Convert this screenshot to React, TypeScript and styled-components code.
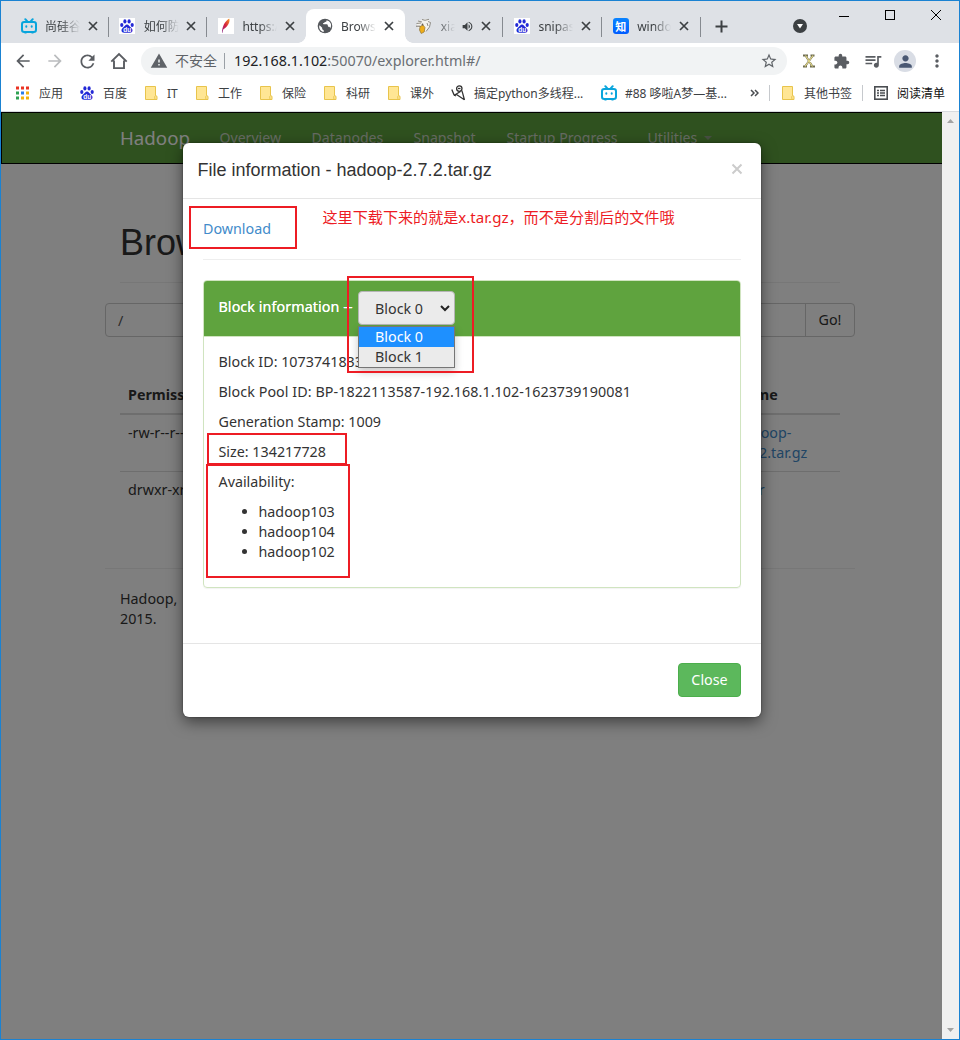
import React from "react";
import styled, { createGlobalStyle, css } from "styled-components";
import {
  MdArrowBack,
  MdArrowForward,
  MdRefresh,
  MdWarning,
  MdStarBorder,
  MdExtension,
  MdQueueMusic,
  MdPerson,
  MdMoreVert,
  MdVolumeUp,
} from "react-icons/md";

const ui = `"Noto Sans", "Noto Sans CJK SC", sans-serif`;

const GlobalStyle = createGlobalStyle`
  * { box-sizing: border-box; }
  body { margin: 0; font-family: ${ui}; overflow: hidden; }
  h1, h4, p, ul { margin: 0; padding: 0; font-weight: 400; }
  svg { display: block; flex: none; }
`;

/* ---------- browser window ---------- */

const Window = styled.div`
  width: 960px;
  height: 1040px;
  border: 1px solid #1a82d2;
  display: flex;
  flex-direction: column;
  background: #fff;
  overflow: hidden;
`;

const TabStrip = styled.div`
  height: 42px;
  flex: none;
  background: #dee1e6;
  display: flex;
  padding: 8px 0 0 9px;
`;

const Tab = styled.div<{ $active?: boolean; $divider?: boolean }>`
  width: 98.7px;
  height: 34px;
  display: flex;
  align-items: center;
  padding-left: 10.5px;
  position: relative;
  ${(p) =>
    p.$divider &&
    css`
      &::after {
        content: "";
        position: absolute;
        right: 0;
        top: 8px;
        width: 1px;
        height: 20px;
        background: #868a90;
      }
    `}
  ${(p) =>
    p.$active &&
    css`
      background: #fff;
      border-radius: 8px 8px 0 0;
      &::before,
      &::after {
        content: "";
        position: absolute;
        bottom: 0;
        width: 8px;
        height: 8px;
      }
      &::before {
        left: -8px;
        background: radial-gradient(circle at 0 0, transparent 7.5px, #fff 8px);
      }
      &::after {
        right: -8px;
        background: radial-gradient(circle at 100% 0, transparent 7.5px, #fff 8px);
      }
    `}
`;

const TabTitle = styled.span<{ $w: number }>`
  width: ${(p) => p.$w}px;
  margin-left: 8.5px;
  overflow: hidden;
  white-space: nowrap;
  font-size: 12px;
  line-height: 18px;
  padding-top: 1px;
  color: #3c4043;
  mask-image: linear-gradient(to right, #000 calc(100% - 18px), transparent);
`;

const TabClose = styled.span`
  margin-left: 7.5px;
`;

const NewTab = styled.div`
  width: 30px;
  height: 34px;
  display: flex;
  align-items: center;
  margin-left: 14px;
`;

const TabSearch = styled.div`
  height: 34px;
  display: flex;
  align-items: center;
  margin-left: 48px;
`;

const WindowControls = styled.div`
  display: flex;
  align-items: center;
  height: 16px;
  margin: -2px 0 0 31px;
  gap: 34px;
`;

const Toolbar = styled.div`
  height: 36px;
  flex: none;
  display: flex;
  align-items: center;
  padding-left: 6px;
`;

const ToolButton = styled.div<{ $dim?: boolean }>`
  width: 32px;
  height: 32px;
  display: flex;
  align-items: center;
  justify-content: center;
  color: ${(p) => (p.$dim ? "#babcbe" : "#5a5d62")};
`;

const Omnibox = styled.div`
  width: 646px;
  height: 28px;
  margin: 0 6px 0 6px;
  border-radius: 14px;
  background: #f1f3f4;
  display: flex;
  align-items: center;
  padding: 0 9px 0 9px;
  color: #5f6368;
`;

const Security = styled.span`
  width: 50px;
  margin-left: 7px;
  font-size: 14px;
  line-height: 20px;
  border-right: 1px solid #9aa0a6;
  height: 16px;
  display: flex;
  align-items: center;
  white-space: nowrap;
`;

const Url = styled.span`
  margin-left: 9px;
  flex: 1;
  font-size: 14.3px;
  line-height: 20px;
  color: #6a6e73;
  b {
    font-weight: 400;
    color: #202124;
  }
`;

const Avatar = styled.div`
  width: 22px;
  height: 22px;
  border-radius: 50%;
  background: #d9dde5;
  color: #4a5873;
  display: flex;
  align-items: center;
  justify-content: center;
`;

const Bookmarks = styled.div`
  height: 33px;
  flex: none;
  display: flex;
  align-items: center;
  padding: 0 0 4px 14px;
  border-bottom: 1px solid #d7dade;
`;

const Bookmark = styled.div<{ $w: number; $gap?: number; $indent?: number; $dark?: boolean }>`
  width: ${(p) => p.$w}px;
  padding-left: ${(p) => p.$indent ?? 0}px;
  display: flex;
  align-items: center;
  gap: ${(p) => p.$gap ?? 9}px;
  font-size: 12px;
  line-height: 18px;
  white-space: nowrap;
  color: ${(p) => (p.$dark ? "#111" : "#3c4043")};
  span {
    padding-top: 2px;
  }
`;

const BookmarkDivider = styled.div`
  width: 1px;
  height: 16px;
  background: #c6c9cd;
`;

/* ---------- page ---------- */

const Viewport = styled.div`
  flex: 1;
  min-height: 0;
  display: flex;
  position: relative;
`;

const Page = styled.div`
  flex: 1;
  background: #fff;
  font-size: 14.3px;
  line-height: 20px;
  color: #333;
`;

const Backdrop = styled.div`
  position: absolute;
  inset: 0 17px 0 0;
  background: rgba(0, 0, 0, 0.5);
`;

const Scrollbar = styled.div`
  width: 17px;
  background: #f0f0f0;
  display: flex;
  flex-direction: column;
  justify-content: space-between;
  align-items: center;
  padding: 7px 0 7px;
`;

const Navbar = styled.div`
  height: 52px;
  border: 1px solid #000;
  border-right: 0;
  background: #5fa33e;
  padding-left: 118px;
  display: flex;
  align-items: center;
`;

const Brand = styled.div`
  width: 99.5px;
  font-size: 18.7px;
  color: #fff;
`;

const NavLink = styled.div<{ $w: number }>`
  width: ${(p) => p.$w}px;
  color: #ccd6c6;
  font-size: 14.1px;
  display: flex;
  align-items: center;
  gap: 7px;
  white-space: nowrap;
`;

const Caret = styled.i`
  border: 4px solid transparent;
  border-top-color: #8fa087;
  border-bottom: 0;
`;

const Container = styled.div`
  width: 750px;
  margin-left: 104px;
`;

const PageHeader = styled.div`
  margin: 0 15px;
  height: 119px;
  border-bottom: 1px solid #eee;
  padding-top: 59px;
`;

const PageTitle = styled.h1`
  font: 400 36px/40px "Liberation Sans", sans-serif;
`;

const PathForm = styled.div`
  display: flex;
  height: 34px;
  margin-top: 20px;
  border: 1px solid #ccc;
  border-radius: 4px;
`;

const PathInput = styled.div`
  flex: 1;
  padding: 7px 12px;
  color: #555;
`;

const GoButton = styled.div`
  width: 49px;
  border-left: 1px solid #ccc;
  padding: 6px 0;
  text-align: center;
`;

const Table = styled.div`
  margin: 40px 15px 0;
  height: 191px;
`;

const TableRow = styled.div<{ $head?: boolean; $h: number }>`
  display: grid;
  grid-template-columns: 607px 1fr;
  height: ${(p) => p.$h}px;
  padding: 8px 8px 0;
  font-weight: ${(p) => (p.$head ? 700 : 400)};
  border-bottom: ${(p) => (p.$head ? 2 : 1)}px solid #ddd;
  &:last-child {
    border-bottom: 0;
  }
`;

const FileLink = styled.span`
  color: #428bca;
`;

const Footer = styled.div`
  border-top: 1px solid #eee;
  padding: 20px 15px;
  p {
    width: 62px;
  }
`;

/* ---------- modal ---------- */

const Modal = styled.div`
  position: absolute;
  left: 182px;
  top: 31px;
  width: 578px;
  height: 574px;
  border-radius: 6px;
  background: #fff;
  box-shadow: 0 5px 15px rgba(0, 0, 0, 0.5), 0 0 2px rgba(0, 0, 0, 0.5);
  font-size: 14.3px;
  line-height: 20px;
  color: #333;
  display: flex;
  flex-direction: column;
`;

const ModalHeader = styled.div`
  height: 56px;
  border-bottom: 1px solid #e5e5e5;
  padding: 14px 18px 0 14.5px;
  display: flex;
  justify-content: space-between;
`;

const ModalTitle = styled.h4`
  font: 400 18px/26px "Liberation Sans", sans-serif;
`;

const ModalClose = styled.span`
  padding-top: 6px;
`;

const ModalBody = styled.div`
  padding: 20px;
  height: 444px;
`;

const Download = styled.div`
  height: 41px;
  border-bottom: 1px solid #eee;
  color: #428bca;
`;

const Panel = styled.div`
  margin-top: 20px;
  height: 308px;
  border: 1px solid #d0e4c0;
  border-radius: 4px;
  box-shadow: 0 1px 1px rgba(0, 0, 0, 0.05);
`;

const PanelHeading = styled.div`
  height: 56px;
  background: #5fa33e;
  border-bottom: 1px solid #d0e4c0;
  border-radius: 3px 3px 0 0;
  color: #fff;
  padding: 10px 15px 10px 14.5px;
  display: flex;
  gap: 4.5px;
  text-shadow: 0 0 0.6px #fff;
`;

const HeadingText = styled.span`
  padding-top: 6px;
  width: 135px;
  white-space: nowrap;
  letter-spacing: 0.08px;
`;

const SelectBox = styled.div`
  position: relative;
  width: 97px;
  height: 34px;
  border: 1px solid #b5b5b5;
  border-radius: 4px;
  background: #ebebeb;
  color: #333;
  padding: 1px 4px 0 16px;
  display: flex;
  align-items: center;
  justify-content: space-between;
  text-shadow: none;
`;

const Options = styled.div`
  position: absolute;
  left: -1px;
  top: 34px;
  width: 97px;
  border: 1px solid #767676;
  background: #ebebeb;
  box-shadow: 0 4px 8px rgba(0, 0, 0, 0.22);
`;

const Option = styled.div<{ $selected?: boolean }>`
  height: 20px;
  padding-left: 16px;
  background: ${(p) => (p.$selected ? "#1e90ff" : "#ebebeb")};
  color: ${(p) => (p.$selected ? "#fff" : "#333")};
`;

const PanelBody = styled.div`
  padding: 15px 15px 15px 14.5px;
  p {
    margin-bottom: 10px;
  }
  ul {
    padding-left: 40px;
  }
`;

const PoolId = styled.p`
  letter-spacing: 0.06px;
`;

const ModalFooter = styled.div`
  flex: 1;
  border-top: 1px solid #e5e5e5;
  padding: 19px 20px;
  display: flex;
  justify-content: flex-end;
`;

const CloseButton = styled.div`
  width: 63px;
  height: 34px;
  border: 1px solid #4cae4c;
  border-radius: 4px;
  background: #5cb85c;
  color: #fff;
  line-height: 32px;
  text-align: center;
`;

/* Red marker rectangles drawn on top of the dialog */
const Marker = styled.div<{ $x: number; $y: number; $w: number; $h: number }>`
  position: absolute;
  left: ${(p) => p.$x}px;
  top: ${(p) => p.$y}px;
  width: ${(p) => p.$w}px;
  height: ${(p) => p.$h}px;
  border: 2px solid #ed1c24;
`;

const Note = styled.div`
  position: absolute;
  left: 139.5px;
  top: 64px;
  color: #ed1c24;
  font-size: 15.1px;
  white-space: nowrap;
`;

/* ---------- icons ---------- */

const CloseX = () => (
  <svg width="10" height="10" viewBox="0 0 10 10" stroke="#3c4043" strokeWidth="1.7">
    <path d="M1 1l8 8M9 1l-8 8" />
  </svg>
);

const Bilibili = () => (
  <svg width="16" height="16" viewBox="0 0 16 16" fill="none" stroke="#0aa5dc" strokeWidth="2" strokeLinecap="round">
    <rect x="1" y="4" width="14" height="10" rx="2.2" />
    <path d="M4.3 1.2l1.8 2M11.7 1.2l-1.8 2" />
    <path d="M5.3 8.200v.6M10.700 8.200v.6" />
    <path d="M4 15h1M11 15h1" strokeWidth="1.2" />
  </svg>
);

const PawText = styled.text`
  font: 700 6.5px "Liberation Sans", sans-serif;
  fill: #fff;
`;

const Baidu = ({ tile }: { tile?: boolean }) => (
  <svg width={tile ? 16 : 14} height={tile ? 16 : 14} viewBox={tile ? "-1 -1 16 16" : "0 0 14 14"} fill="#2329d6">
    {tile && <rect x="-1" y="-1" width="16" height="16" fill="#fff" />}
    <ellipse cx="1.800" cy="6" rx="1.600" ry="2" />
    <ellipse cx="4.900" cy="2.400" rx="1.600" ry="2.100" />
    <ellipse cx="9.100" cy="2.400" rx="1.600" ry="2.100" />
    <ellipse cx="12.200" cy="6" rx="1.600" ry="2" />
    <path d="M7 5.400c1.600 0 2.300 1.500 3.300 2.500 1.300 1.200 2.300 2 2.200 3.700-.1 1.700-1.500 2.400-3 2.200-1.700-.2-3.300-.2-5 0-1.500.2-2.900-.5-3-2.200C1.400 9.900 2.400 9.100 3.700 7.900 4.700 6.900 5.400 5.400 7 5.400z" />
    <PawText x="3.2" y="12.600">du</PawText>
  </svg>
);

const Feather = () => (
  <svg width="16" height="16" viewBox="0 0 16 16">
    <defs>
      <linearGradient id="feather" x1="0" y1="1" x2="1" y2="0">
        <stop offset="0" stopColor="#8a2a8c" />
        <stop offset=".5" stopColor="#d5203e" />
        <stop offset="1" stopColor="#f59a23" />
      </linearGradient>
    </defs>
    <rect width="16" height="16" fill="#fff" />
    <path d="M4 14.8C4 9 6.600 3.500 11.200.6c1.300 3-1.200 8.200-6 10.900L4.400 15z" fill="url(#feather)" />
  </svg>
);

const Globe = () => (
  <svg width="16" height="16" viewBox="0 0 16 16">
    <circle cx="8" cy="8" r="7.300" fill="#54575b" />
    <path
      d="M2.500 7.200l2.700 2.600v1.400l1.500 1v1.700C4 13.400 2 11 2.200 8.200zM9.500 2.200c.3 1-.2 1.700-1.300 1.700-.9 0-.8.9-1.600 1.200-.8.200-.8 1 0 1.200h3.200c.9 0 1 .9 1.100 1.700.1.700 1 .7 1.700 1 .5.3.6.900.4 1.500 1.200-1.600 1.400-3.600.6-5.300C12.900 3.700 11.300 2.500 9.500 2.200z"
      fill="#fff"
    />
  </svg>
);

const Home = () => (
  <svg width="18" height="18" viewBox="0 0 18 18" fill="none" stroke="#5a5d62" strokeWidth="1.900">
    <path d="M1.300 9.700L9 2l7.700 7.700M4 8.500v7.600h10V8.500" />
  </svg>
);

const Eagle = () => (
  <svg width="17" height="17" viewBox="0 0 17 17">
    <path d="M3 3.500L8 1.500l5-.5 2.500 3-1 5-4 5-4 1.500L5 11 1.500 8.500z" fill="#f4f2ec" />
    <path d="M1.500 5.500l4.500-.5M3 3l4 1M7 1.500l3 .8 4-1M13 3.500l2.500 1-1 4.500-3.500 4.500M12 5l1 3" stroke="#85817b" strokeWidth=".9" fill="none" />
    <path d="M1 8.200h4l1.500 1.500" stroke="#77736d" fill="none" />
    <path d="M5 8.500L8 7l2 2.500-.8 4.500-3 1.500L4.500 12z" fill="#efae19" stroke="#8d7138" strokeWidth=".7" />
    <circle cx="7.500" cy="6.500" r=".9" fill="#6b6052" />
  </svg>
);

const ZhiTile = styled.span`
  width: 16px;
  height: 16px;
  border-radius: 3px;
  background: linear-gradient(#0a84ff, #005cff);
  color: #fff;
  font: 700 11px/16px "Noto Sans CJK SC", sans-serif;
  text-align: center;
  flex: none;
`;

const Speaker = styled(MdVolumeUp)`
  margin-left: 6px;
  color: #3c4043;
`;

const Folder = () => (
  <svg width="13" height="15" viewBox="0 0 13 15" fill="#ffe694" stroke="#e8c44c">
    <path d="M.5.500h10v9l1.500.800v3.200H.500z" />
    <path d="M10.500 9.500c-1.500 1.500-.5 3-.5 4" fill="none" />
  </svg>
);

const appColors = ["#ea3323", "#ea3323", "#ea3323", "#2fa152", "#2a7de9", "#f3b10b", "#2fa152", "#f3b10b", "#f3b10b"];
const Apps = () => (
  <svg width="14" height="14" viewBox="0 0 14 14">
    {appColors.map((c, i) => (
      <rect key={i} x={(i % 3) * 5 + 1} y={Math.floor(i / 3) * 5 + 0.5} width="3" height="3" fill={c} />
    ))}
  </svg>
);

const Doodle = () => (
  <svg width="15" height="16" viewBox="0 0 15 16" fill="none" stroke="#333" strokeWidth="1.300">
    <circle cx="8.300" cy="3.600" r="2.700" />
    <path d="M.8 4.500L3 9.800l2 1.200M2.800 10.500L9.500 6.500M10.500 5c1.500 3 2 7 3 10M13 14.500L5.500 9.500" />
    <path d="M7 3.500h2.500" />
  </svg>
);

const ReadingList = () => (
  <svg width="14" height="14" viewBox="0 0 14 14" stroke="#4a4d51" fill="none">
    <rect x=".8" y=".8" width="12.400" height="12.400" strokeWidth="1.600" />
    <path d="M3 4.500h2M3 7h2M3 9.500h2M6 4.500h5M6 7h5M6 9.500h5" strokeWidth="1.300" />
  </svg>
);

const ScrollArrow = ({ down }: { down?: boolean }) => (
  <svg width="7" height="4" viewBox="0 0 7 4" fill="#a3a3a3">
    <path d={down ? "M0 0h7L3.500 4z" : "M0 4h7L3.500 0z"} />
  </svg>
);

export default function App() {
  return (
    <>
      <GlobalStyle />
      <Window>
        <TabStrip>
          <Tab $divider>
            <Bilibili />
            <TabTitle $w={35}>尚硅谷大数据</TabTitle>
            <TabClose><CloseX /></TabClose>
          </Tab>
          <Tab $divider>
            <Baidu tile />
            <TabTitle $w={35}>如何防止</TabTitle>
            <TabClose><CloseX /></TabClose>
          </Tab>
          <Tab>
            <Feather />
            <TabTitle $w={35}>https://</TabTitle>
            <TabClose><CloseX /></TabClose>
          </Tab>
          <Tab $active>
            <Globe />
            <TabTitle $w={35}>Browsing</TabTitle>
            <TabClose><CloseX /></TabClose>
          </Tab>
          <Tab $divider>
            <Eagle />
            <TabTitle $w={14}>xiao</TabTitle>
            <Speaker size={13} />
            <TabClose><CloseX /></TabClose>
          </Tab>
          <Tab $divider>
            <Baidu tile />
            <TabTitle $w={35}>snipaste</TabTitle>
            <TabClose><CloseX /></TabClose>
          </Tab>
          <Tab $divider>
            <ZhiTile>知</ZhiTile>
            <TabTitle $w={34}>windows</TabTitle>
            <TabClose><CloseX /></TabClose>
          </Tab>
          <NewTab>
            <svg width="13" height="13" viewBox="0 0 13 13" stroke="#3c4043" strokeWidth="2">
              <path d="M6.500.500v12M.500 6.500h12" />
            </svg>
          </NewTab>
          <TabSearch>
            <svg width="14" height="14" viewBox="0 0 14 14">
              <circle cx="7" cy="7" r="7" fill="#3c4043" />
              <path d="M4 5h6L7 9.500z" fill="#fff" />
            </svg>
          </TabSearch>
          <WindowControls>
            <svg width="12" height="12" viewBox="0 0 12 12" stroke="#000"><path d="M1 7.500h10" /></svg>
            <svg width="12" height="12" viewBox="0 0 12 12" stroke="#000" fill="none"><rect x="1.500" y="1.500" width="9" height="9" /></svg>
            <svg width="12" height="12" viewBox="0 0 12 12" stroke="#000"><path d="M1 1l10 10M11 1L1 11" /></svg>
          </WindowControls>
        </TabStrip>

        <Toolbar>
          <ToolButton><MdArrowBack size={20} /></ToolButton>
          <ToolButton $dim><MdArrowForward size={20} /></ToolButton>
          <ToolButton><MdRefresh size={21} /></ToolButton>
          <ToolButton><Home /></ToolButton>
          <Omnibox>
            <MdWarning size={18} />
            <Security>不安全</Security>
            <Url><b>192.168.1.102</b>:50070/explorer.html#/</Url>
            <MdStarBorder size={18} />
          </Omnibox>
          <ToolButton>
            <svg width="14" height="14" viewBox="0 0 14 14" fill="none">
              <path d="M3.500 1.500l7 11M11 1.500l-8 11M1 1.500h5M8.500 1.500h4M1 12.500h4M8 12.500h5" stroke="#6d6b4e" strokeWidth="1.900" />
              <path d="M3.500 1.500l7 11M11 1.500l-8 11" stroke="#e8dc8a" strokeWidth="1.100" />
            </svg>
          </ToolButton>
          <ToolButton><MdExtension size={17} /></ToolButton>
          <ToolButton><MdQueueMusic size={20} /></ToolButton>
          <ToolButton><Avatar><MdPerson size={19} /></Avatar></ToolButton>
          <ToolButton><MdMoreVert size={20} /></ToolButton>
        </Toolbar>

        <Bookmarks>
          <Bookmark $w={65} $gap={10}><Apps /><span>应用</span></Bookmark>
          <Bookmark $w={65}><Baidu /><span>百度</span></Bookmark>
          <Bookmark $w={51}><Folder /><span>IT</span></Bookmark>
          <Bookmark $w={64}><Folder /><span>工作</span></Bookmark>
          <Bookmark $w={64}><Folder /><span>保险</span></Bookmark>
          <Bookmark $w={64}><Folder /><span>科研</span></Bookmark>
          <Bookmark $w={63}><Folder /><span>课外</span></Bookmark>
          <Bookmark $w={150} $gap={8}><Doodle /><span>搞定python多线程...</span></Bookmark>
          <Bookmark $w={149} $gap={8}><Bilibili /><span>#88 哆啦A梦—基...</span></Bookmark>
          <Bookmark $w={19}>
            <svg width="9" height="8" viewBox="0 0 9 8" fill="none" stroke="#4a4d51" strokeWidth="1.500">
              <path d="M1 1l3 3-3 3M5 1l3 3-3 3" />
            </svg>
          </Bookmark>
          <BookmarkDivider />
          <Bookmark $w={92} $indent={12}><Folder /><span>其他书签</span></Bookmark>
          <BookmarkDivider />
          <Bookmark $w={92} $indent={11} $dark><ReadingList /><span>阅读清单</span></Bookmark>
        </Bookmarks>

        <Viewport>
          <Page>
            <Navbar>
              <Brand>Hadoop</Brand>
              <NavLink $w={92}>Overview</NavLink>
              <NavLink $w={102}>Datanodes</NavLink>
              <NavLink $w={93}>Snapshot</NavLink>
              <NavLink $w={141}>Startup Progress</NavLink>
              <NavLink $w={70}>Utilities<Caret /></NavLink>
            </Navbar>
            <Container>
              <PageHeader>
                <PageTitle>Browse Directory</PageTitle>
              </PageHeader>
              <PathForm>
                <PathInput>/</PathInput>
                <GoButton>Go!</GoButton>
              </PathForm>
              <Table>
                <TableRow $head $h={38}><span>Permission</span><span>Name</span></TableRow>
                <TableRow $h={57}><span>-rw-r--r--</span><FileLink>hadoop-<br />2.7.2.tar.gz</FileLink></TableRow>
                <TableRow $h={57}><span>drwxr-xr-x</span><FileLink>user</FileLink></TableRow>
              </Table>
              <Footer><p>Hadoop, 2015.</p></Footer>
            </Container>
          </Page>
          <Scrollbar>
            <ScrollArrow />
            <ScrollArrow down />
          </Scrollbar>
          <Backdrop />

          <Modal>
            <ModalHeader>
              <ModalTitle>File information - hadoop-2.7.2.tar.gz</ModalTitle>
              <ModalClose>
                <svg width="12" height="12" viewBox="0 0 12 12" stroke="#ccc" strokeWidth="2">
                  <path d="M1.500 1.500l9 9M10.500 1.500l-9 9" />
                </svg>
              </ModalClose>
            </ModalHeader>
            <ModalBody>
              <Download>Download</Download>
              <Panel>
                <PanelHeading>
                  <HeadingText>Block information --</HeadingText>
                  <SelectBox>
                    Block 0
                    <svg width="10" height="7" viewBox="0 0 10 7" fill="none" stroke="#222" strokeWidth="2">
                      <path d="M1 1l4 4 4-4" />
                    </svg>
                    <Options>
                      <Option $selected>Block 0</Option>
                      <Option>Block 1</Option>
                    </Options>
                  </SelectBox>
                </PanelHeading>
                <PanelBody>
                  <p>Block ID: 1073741833</p>
                  <PoolId>Block Pool ID: BP-1822113587-192.168.1.102-1623739190081</PoolId>
                  <p>Generation Stamp: 1009</p>
                  <p>Size: 134217728</p>
                  <p>Availability:</p>
                  <ul>
                    <li>hadoop103</li>
                    <li>hadoop104</li>
                    <li>hadoop102</li>
                  </ul>
                </PanelBody>
              </Panel>
            </ModalBody>
            <ModalFooter>
              <CloseButton>Close</CloseButton>
            </ModalFooter>
            <Note>这里下载下来的就是x.tar.gz，而不是分割后的文件哦</Note>
            <Marker $x={6} $y={63} $w={108} $h={43} />
            <Marker $x={164} $y={133} $w={127} $h={97} />
            <Marker $x={24} $y={290} $w={140} $h={32} />
            <Marker $x={23} $y={321} $w={144} $h={114} />
          </Modal>
        </Viewport>
      </Window>
    </>
  );
}
